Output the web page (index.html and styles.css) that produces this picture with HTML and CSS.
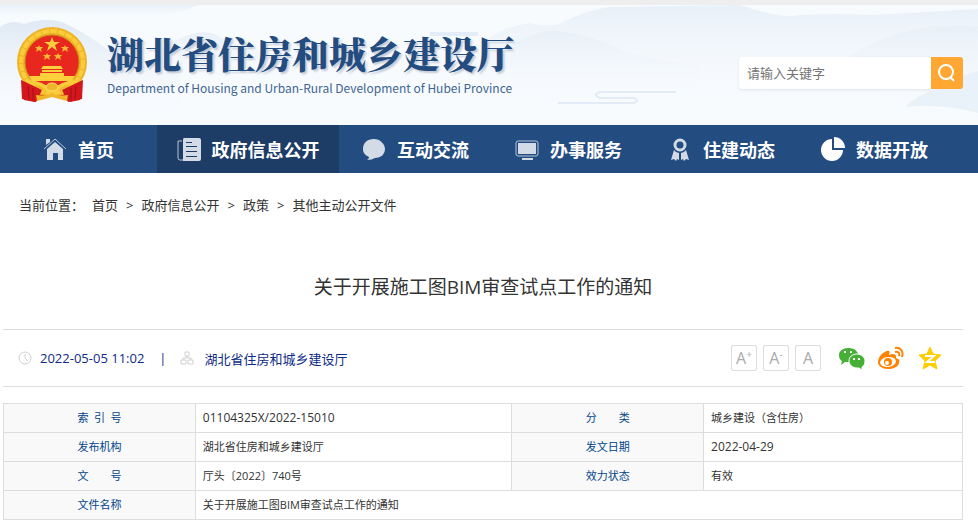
FILE: index.html
```
<!DOCTYPE html>
<html lang="zh-CN">
<head>
  <meta charset="UTF-8" />
  <meta name="viewport" content="width=device-width, initial-scale=1" />
  <title>关于开展施工图BIM审查试点工作的通知</title>
  <link rel="stylesheet" href="styles.css">
</head>
<body>

  <header class="header">
    <!-- misty mountains behind the logo -->
    <svg class="header-bg" viewBox="0 0 978 120" preserveAspectRatio="none" aria-hidden="true">
      <defs>
        <linearGradient id="mist" x1="0" y1="0" x2="0" y2="1">
          <stop offset="0" stop-color="#dfe9f4" />
          <stop offset="1" stop-color="#f8fafd" stop-opacity="0" />
        </linearGradient>
        <linearGradient id="haze" x1="0" y1="0" x2="0" y2="1">
          <stop offset="0" stop-color="#e8f0f8" />
          <stop offset="1" stop-color="#f8fafd" stop-opacity="0" />
        </linearGradient>
      </defs>
      <path fill="url(#haze)" d="M0 0H200Q150 20 90 10Q40 6 0 14Z" />
      <path fill="url(#mist)" d="M0 22Q12 14 24 19Q44 12 62 17Q86 28 110 46Q140 62 180 70V120H0Z" />
      <path fill="url(#haze)" d="M160 45Q190 24 212 28Q240 44 290 52L340 80H160Z" />
      <path fill="url(#haze)" d="M480 40Q500 22 530 18Q550 24 565 16Q590 4 610 2L740 0Q780 14 800 10Q840 8 870 10L978 4V110H480Z" />
      <path fill="url(#haze)" d="M510 42Q535 24 560 26Q590 30 620 44Q650 56 700 60V90H510Z" />
      <path fill="url(#haze)" d="M850 50Q880 34 900 28Q940 18 978 22V70Q930 90 890 106Z" />
      <path fill="#e3ecf7" opacity=".7" d="M978 66Q950 74 935 84Q915 92 905 102Q940 98 978 108Z" />
      <path fill="#e3edf7" d="M430 27h48v4h-48z" />
      <path fill="none" stroke="#e3ecf6" stroke-width="2" d="M558 98H634Q640 96 634 93H600Q592 90 600 87H676" />
    </svg>

    <a class="logo" href="#">
      <svg class="emblem" viewBox="0 0 72 78" aria-hidden="true">
        <path fill="#d3171c" d="M9 52L8 74L19 76L25 70H47L54 76L64 74L62 52Z" />
        <circle cx="36" cy="36" r="35" fill="#eeb225" />
        <circle cx="36" cy="36" r="31" fill="none" stroke="#fbcd3c" stroke-width="4" stroke-dasharray="7 1" />
        <circle cx="36" cy="36" r="27" fill="#e8281f" stroke="#c8861b" />
        <path fill="#fbd03b" d="M36 11l2 5h6l-5 3 2 6-5-4-5 4 2-6-5-3h6z" />
        <path fill="#f4b832" d="M23 19l1 2h3l-2 2 1 3-3-2-3 2 1-3-2-2h3zM49 19l1 2h3l-2 2 1 3-3-2-3 2 1-3-2-2h3zM31 27l1 2h3l-2 2 1 3-3-2-3 2 1-3-2-2h3zM42 27l1 2h3l-2 2 1 3-3-2-3 2 1-3-2-2h3z" />
        <path fill="#fbd03b" d="M27 40h18l2 3H25zM26 44h20v2H26zM24 47h24v4H24zM13 50h46l-3 5H16z" />
        <path fill="#d3171c" d="M5 54Q18 60 26 64L20 76L6 73ZM67 54Q54 60 46 64L52 76L66 73Z" />
        <path fill="none" stroke="#9d1216" d="M12 60l1 13M17 62l0 12M60 60l-1 13M55 62l0 12" />
        <path fill="none" stroke="#f9cb38" stroke-width="4" d="M14 56Q27 58 31 63Q36 68 41 63Q45 58 58 56" />
        <ellipse cx="36" cy="61" rx="6" ry="4" fill="#f1b52c" stroke="#ffe06a" />
        <path fill="#f1b52c" d="M20 69L30 70L36 67L42 70L52 69L51 75L43 73L36 71L29 73L21 75Z" />
      </svg>
      <span class="logo-text">
        <span class="logo-cn">湖北省住房和城乡建设厅</span>
        <span class="logo-en">Department of Housing and Urban-Rural Development of Hubei Province</span>
      </span>
    </a>

    <form class="search">
      <input type="text" placeholder="请输入关键字" aria-label="请输入关键字" />
      <button type="submit" aria-label="搜索">
        <svg viewBox="0 0 20 20" aria-hidden="true">
          <circle cx="9" cy="9" r="7" />
          <path d="M13 14l4 4" />
        </svg>
      </button>
    </form>
  </header>

  <nav class="nav">
    <a href="#">
      <svg viewBox="0 0 24 24" aria-hidden="true">
        <path d="M12 5l8 7v11h-5v-7h-5v7H4V12z" />
        <path d="M3 2h4v3L3 8z" />
        <path class="line" d="M1 12L12 2l11 10" />
      </svg>首页</a>
    <a class="active" href="#">
      <svg viewBox="0 0 24 24" aria-hidden="true">
        <path fill-rule="evenodd" d="M7 1h15q2 0 2 2v19q0 2-2 2H6V3q0-2 1-2zM9 5v1h6V5zM9 9v1h11V9zM9 14v1h11v-1zM9 19v1h11v-1z" />
        <path class="line" d="M5 4H1v17q0 2 2 2h3" />
      </svg>政府信息公开</a>
    <a href="#">
      <svg viewBox="0 0 24 24" aria-hidden="true">
        <path d="M12 2C5 2 1 6 1 12c0 4 2 6 6 8q0 2-2 3q5 0 8-2c6 0 10-4 10-9S18 2 12 2z" />
      </svg>互动交流</a>
    <a href="#">
      <svg viewBox="0 0 24 24" aria-hidden="true">
        <rect class="line" x="1" y="4" width="22" height="15" rx="2" />
        <path d="M3 6h18v11H3zM7 21h11v2H7z" />
      </svg>办事服务</a>
    <a href="#">
      <svg viewBox="0 0 24 24" aria-hidden="true">
        <circle class="badge" cx="12" cy="8" r="5" />
        <path d="M6 13q2 3 5 3v7l-2-1-1 2-2-2-3 1zM18 13q-2 3-5 3v7l2-1 1 2 2-2 3 1z" />
      </svg>住建动态</a>
    <a href="#">
      <svg class="bright" viewBox="0 0 24 24" aria-hidden="true">
        <path d="M11 2v11h11a11 11 0 1 1-11-11z" />
        <path d="M13 0a11 11 0 0 1 11 11H13z" />
      </svg>数据开放</a>
  </nav>

  <main class="main">
    <div class="crumbs">
      <span>当前位置：</span>
      <a href="#">首页</a>
      <span>&gt;</span>
      <a href="#">政府信息公开</a>
      <span>&gt;</span>
      <a href="#">政策</a>
      <span>&gt;</span>
      <a href="#">其他主动公开文件</a>
    </div>

    <h1>关于开展施工图BIM审查试点工作的通知</h1>

    <div class="info">
      <div class="source">
        <svg viewBox="0 0 14 14" aria-hidden="true">
          <circle cx="7" cy="7" r="6" />
          <path d="M7 3v4l3 3" />
        </svg>
        <span>2022-05-05 11:02</span>
        <span class="bar">|</span>
        <svg viewBox="0 0 14 14" aria-hidden="true">
          <path d="M5 1h4v4H5zM1 9h5v4H1zM8 9h5v4H8zM7 5v2M3 9V7h8v2" />
        </svg>
        <span class="org">湖北省住房和城乡建设厅</span>
      </div>
      <div class="tools">
        <button type="button">A<sup>+</sup></button>
        <button type="button">A<sup>-</sup></button>
        <button type="button">A</button>
      </div>
      <div class="share">
        <a href="#" aria-label="微信">
          <svg viewBox="0 0 26 24" aria-hidden="true">
            <path fill="#45b035" d="M9 2C4 2 0 5 0 9c0 3 1 5 3 6l-1 4 4-3h5l8-8c-1-4-5-6-10-6z" />
            <path fill="#45b035" stroke="#fff" d="M18 8c-5 0-8 3-8 7s4 7 8 7h2l3 2v-3c2-1 3-3 3-6 0-4-4-7-8-7z" />
            <path fill="#fff" d="M5 5h2v2H5zM11 5h2v2h-2zM14 12h2v2h-2zM19 12h2v2h-2z" />
          </svg>
        </a>
        <a href="#" aria-label="微博">
          <svg viewBox="0 0 26 24" aria-hidden="true">
            <path fill="#ff8200" d="M9 5c3-1 3 1 2 4 4-2 8-1 7 3 3 1 4 2 3 5-1 4-6 6-11 6-6 0-10-3-10-7C0 11 5 6 9 5z" />
            <ellipse cx="10" cy="16" rx="8" ry="5" fill="#fff" transform="rotate(-8 10 16)" />
            <circle cx="10" cy="16" r="4" fill="#ff8200" />
            <circle cx="9" cy="17" r="2" fill="#fff" />
            <path fill="none" stroke="#ff8200" stroke-width="2" d="M17 2c5-1 9 3 7 9M17 6c3-1 5 1 4 4" />
          </svg>
        </a>
        <a href="#" aria-label="QQ空间">
          <svg viewBox="0 0 26 24" aria-hidden="true">
            <path fill="#ffce00" stroke="#ffce00" stroke-linejoin="round" d="M13 1l3 7 8 1-6 6 2 8-7-4-7 4 2-8-6-6 8-1z" />
            <path fill="none" stroke="#fff" stroke-width="2" d="M8 10h9l-7 6h8" />
          </svg>
        </a>
      </div>
    </div>

    <table>
      <tbody>
        <tr>
          <th scope="row"><span class="spread"><i>索</i><i>引</i><i>号</i></span></th>
          <td class="num">01104325X/2022-15010</td>
          <th scope="row"><span class="spread"><i>分</i><i>类</i></span></th>
          <td>城乡建设（含住房）</td>
        </tr>
        <tr>
          <th scope="row">发布机构</th>
          <td>湖北省住房和城乡建设厅</td>
          <th scope="row">发文日期</th>
          <td class="num">2022-04-29</td>
        </tr>
        <tr>
          <th scope="row"><span class="spread"><i>文</i><i>号</i></span></th>
          <td>厅头〔2022〕740号</td>
          <th scope="row">效力状态</th>
          <td>有效</td>
        </tr>
        <tr>
          <th scope="row">文件名称</th>
          <td colspan="3">关于开展施工图BIM审查试点工作的通知</td>
        </tr>
      </tbody>
    </table>
  </main>

</body>
</html>
```
FILE: styles.css
```
* {
  box-sizing: border-box;
}
body {
  margin: 0;
  font-family: 'Open Sans', 'Noto Sans CJK SC', sans-serif;
  font-size: 13px;
  color: #333;
  background: #fff;
}
a {
  color: inherit;
  text-decoration: none;
}

/* header */
.header {
  position: relative;
  display: flex;
  justify-content: space-between;
  align-items: center;
  height: 125px;
  padding: 0 15px 0 16px;
  border-top: 5px solid #eee;
  background: #f8fbfe;
}
.header-bg {
  position: absolute;
  top: 0;
  left: 0;
  width: 100%;
  height: 100%;
}
.logo, .search {
  position: relative;
  display: flex;
}
.logo {
  align-items: center;
  gap: 19px;
  color: #234c80;
}
.emblem {
  width: 72px;
  height: 78px;
}
.logo-text {
  display: flex;
  flex-direction: column;
  gap: 3px;
  padding-bottom: 2px;
}
.logo-cn {
  font-family: 'Noto Serif CJK SC', 'Noto Sans CJK SC', serif;
  font-size: 37px;
  line-height: 44px;
  font-weight: 900;
  text-shadow: 2px 2px 2px #c3cad6;
}
.logo-en {
  color: #416593;
  font-family: 'Noto Sans CJK SC', sans-serif;
  font-size: 12px;
  line-height: 20px;
}
.search {
  padding-top: 16px;
}
.search input {
  width: 192px;
  height: 32px;
  padding: 0 8px;
  border: none;
  border-radius: 3px 0 0 3px;
  background: #fff;
  box-shadow: 0 1px 3px #dde4ee;
  font-family: inherit;
  font-size: 13px;
}
.search input::placeholder {
  color: #757575;
}
.search button {
  display: flex;
  justify-content: center;
  align-items: center;
  width: 32px;
  height: 32px;
  padding: 0;
  border: none;
  border-radius: 0 3px 3px 0;
  background: #ffa633;
  cursor: pointer;
}
.search svg {
  width: 20px;
  height: 20px;
  fill: none;
  stroke: #fff;
  stroke-width: 2;
}

/* main menu */
.nav {
  display: grid;
  grid-template-columns: 157fr 182fr repeat(4, 153fr) 27px;
  background: #234c80;
}
.nav a {
  display: flex;
  justify-content: center;
  align-items: center;
  gap: 11px;
  height: 48px;
  color: #fff;
  font-size: 18px;
  font-weight: bold;
}
.nav a.active {
  background: #1d3c66;
}
.nav svg {
  width: 24px;
  height: 24px;
  fill: #d3dbe6;
}
.nav .bright {
  fill: #fff;
}
.nav .line, .nav .badge {
  fill: none;
  stroke: #b9c6d7;
  stroke-width: 1;
}
.nav .badge {
  stroke: #d3dbe6;
  stroke-width: 3;
}

/* article */
.main {
  margin: 0 15px 0 3px;
}
.crumbs {
  display: flex;
  gap: 8px;
  padding: 22px 16px;
  line-height: 20px;
}
h1 {
  margin: 36px 0 28px;
  font-size: 19px;
  font-weight: normal;
  line-height: 28px;
  text-align: center;
}
.info {
  display: flex;
  align-items: center;
  height: 58px;
  padding: 0 20px 0 15px;
  border-top: 1px solid #ddd;
  border-bottom: 1px solid #ddd;
}
.source {
  display: flex;
  align-items: center;
  gap: 8px;
  margin-right: auto;
  color: #0d2b86;
}
.source svg {
  width: 14px;
  height: 14px;
  fill: none;
  stroke: #d0d0d0;
}
.bar {
  margin: 0 5px 0 7px;
}
.org {
  margin-left: 3px;
}
.tools {
  display: flex;
  gap: 6px;
}
.tools button {
  width: 26px;
  height: 26px;
  padding: 0;
  border: 1px solid #ddd;
  border-radius: 2px;
  background: #fff;
  color: #aaa;
  font-family: inherit;
  font-size: 16px;
  line-height: 24px;
  cursor: pointer;
}
.tools sup {
  font-size: 10px;
  line-height: 0;
}
.share {
  display: flex;
  gap: 13px;
  margin-left: 18px;
}
.share svg {
  display: block;
  width: 26px;
  height: 24px;
}

/* document data */
table {
  width: 100%;
  margin-top: 16px;
  border-collapse: collapse;
  table-layout: fixed;
  font-size: 11px;
  line-height: 20px;
}
th, td {
  height: 29px;
  padding: 0 7px;
  border: 1px solid #ddd;
  text-align: left;
}
th {
  width: 20%;
  background: #f9f9f9;
  color: #00458b;
  font-weight: normal;
  text-align: center;
}
td:nth-child(2) {
  width: 33%;
}
.num {
  font-size: 12px;
}
.spread {
  display: inline-flex;
  justify-content: space-between;
  width: 44px;
}
.spread i {
  font-style: normal;
}
```
